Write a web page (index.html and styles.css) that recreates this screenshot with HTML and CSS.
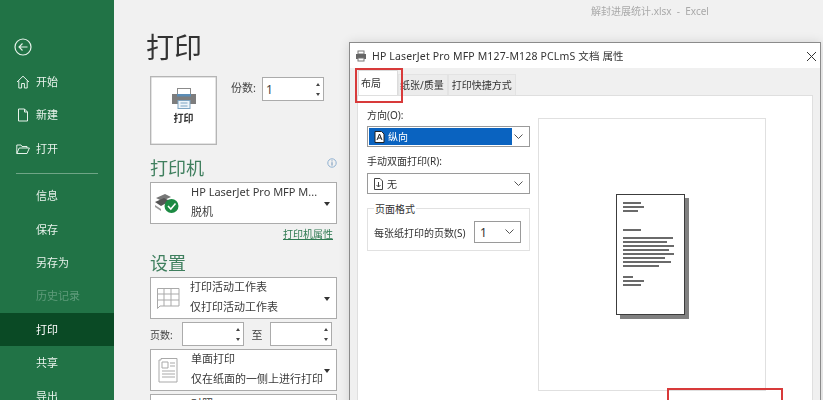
FILE: index.html
```html
<!DOCTYPE html>
<html lang="zh">
<head>
<meta charset="utf-8">
<title>打印</title>
<link rel="stylesheet" href="styles.css">
</head>
<body>
<div class="app">
  <nav class="side">
    <svg class="back" width="18" height="18" viewBox="0 0 18 18"><circle cx="9" cy="9" r="8" fill="none" stroke="#e6f2ea" stroke-width="1.2"/><path d="M13.5 9H5M8.5 5.5 5 9l3.5 3.5" fill="none" stroke="#e6f2ea" stroke-width="1.1"/></svg>
    <ul class="nav">
      <li class="nav-item"><svg class="nav-ico" width="14" height="14" viewBox="0 0 14 14"><path d="M1 7 7 1.2 13 7M2.8 5.6V13H5.6V8.5H8.4V13H11.2V5.6" fill="none" stroke="#e6f2ea"/></svg>开始</li>
      <li class="nav-item"><svg class="nav-ico" width="14" height="14" viewBox="0 0 14 14"><path d="M2.5 1H8.5L11.5 4V13H2.5ZM8.5 1V4H11.5" fill="none" stroke="#e6f2ea"/></svg>新建</li>
      <li class="nav-item"><svg class="nav-ico" width="14" height="14" viewBox="0 0 14 14"><path d="M.8 11.5V3H5L6 4.5H11V6M.8 11.5 3.2 6H13.4L11 11.5Z" fill="none" stroke="#e6f2ea"/></svg>打开</li>
      <li class="nav-rule"></li>
      <li class="nav-item">信息</li>
      <li class="nav-item">保存</li>
      <li class="nav-item">另存为</li>
      <li class="nav-item is-off">历史记录</li>
      <li class="nav-item is-on">打印</li>
      <li class="nav-item">共享</li>
      <li class="nav-item">导出</li>
    </ul>
  </nav>

  <main class="main">
    <div class="doc-name">解封进展统计.xlsx&nbsp; - &nbsp;Excel</div>
    <h1 class="page-title">打印</h1>
    <div class="print-row">
      <button class="print-btn">
        <svg width="24" height="21" viewBox="0 0 24 21"><rect x="5.500" y=".5" width="13" height="8" fill="#fff" stroke="#8b8b8b"/><path d="M0 6H24V16H0Z" fill="#7d7d7d"/><rect x="5" y="6" width="14" height="2.500" fill="#5b8cb5"/><rect x="6" y="12.500" width="12" height="8" fill="#eef5fa" stroke="#7da4c2"/><path d="M8.500 15H15.500M8.500 18H15.500" stroke="#7da4c2"/></svg>
        <span>打印</span>
      </button>
      <label class="copies">份数:</label>
      <div class="spin copies-spin"><span class="spin-val">1</span><span class="arrows"><i class="up"></i><i class="down"></i></span></div>
    </div>

    <div class="head-row">
      <h2 class="sec">打印机</h2>
      <svg class="info" width="10" height="10" viewBox="0 0 10 10"><circle cx="5" cy="5" r="4.2" fill="none" stroke="#8fb0d0"/><path d="M5 4.2V7.6M5 2.4V3.4" stroke="#6f93b8"/></svg>
    </div>
    <div class="drop printer">
      <svg class="drop-ico" width="28" height="24" viewBox="0 0 28 24"><path d="M3 7 12 3 18 6 9 10Z" fill="#777"/><path d="M2 11 11 7 17 10 8 15Z" fill="#555"/><path d="M2 14 8 18 8 20 2 16Z" fill="#999"/><circle cx="18.500" cy="15" r="7" fill="#1c8a43"/><path d="M15 15 17.800 18 22.500 12.500" fill="none" stroke="#fff" stroke-width="1.500"/></svg>
      <div class="drop-text"><span>HP LaserJet Pro MFP M...</span><span>脱机</span></div>
      <i class="caret"></i>
    </div>
    <a class="prop-link">打印机属性</a>

    <h2 class="sec settings">设置</h2>
    <div class="drop">
      <svg class="drop-ico" width="26" height="24" viewBox="0 0 26 24"><path d="M3.500 2.500H25V20H6L3.500 22.500ZM3.500 8H25M3.500 14H25M10 2.500V20M17 2.500V20" fill="none" stroke="#a9a9a9"/></svg>
      <div class="drop-text"><span>打印活动工作表</span><span>仅打印活动工作表</span></div>
      <i class="caret"></i>
    </div>
    <div class="pages">
      <label>页数:</label>
      <div class="spin page-spin"><span class="arrows"><i class="up"></i><i class="down"></i></span></div>
      <label class="to">至</label>
      <div class="spin page-spin"><span class="arrows"><i class="up"></i><i class="down"></i></span></div>
    </div>
    <div class="drop">
      <svg class="drop-ico side-ico" width="22" height="26" viewBox="0 0 22 26"><path d="M4 1.500H20V25H2V3M2 3H4V1.500" fill="none" stroke="#a9a9a9"/><path d="M5 5H11V11H5ZM13 6H18M13 9H18M5 14H18M5 17H18M5 20H18" fill="none" stroke="#a9a9a9"/></svg>
      <div class="drop-text"><span>单面打印</span><span>仅在纸面的一侧上进行打印</span></div>
      <i class="caret"></i>
    </div>
    <div class="drop last"><div class="drop-text"><span>对照</span></div></div>
  </main>
</div>

<section class="dialog">
  <header class="dlg-title">
    <svg width="12" height="12" viewBox="0 0 12 12"><rect x="3" y="1" width="6" height="3" fill="#fff" stroke="#777"/><rect x="1" y="4" width="10" height="5" fill="#666"/><rect x="3" y="8" width="6" height="3" fill="#fff" stroke="#777"/></svg>
    <span class="dlg-name">HP LaserJet Pro MFP M127-M128 PCLmS 文档 属性</span>
    <svg class="close" width="11" height="11" viewBox="0 0 11 11"><path d="M1 1 10 10M10 1 1 10" stroke="#333" stroke-width="1"/></svg>
  </header>
  <div class="tabs">
    <span class="tab active">布局</span>
    <span class="tab paper">纸张/质量</span>
    <span class="tab">打印快捷方式</span>
  </div>
  <div class="panel">
    <div class="form">
      <label class="f-label">方向(O):</label>
      <div class="select focus"><span class="sel-val"><svg width="11" height="12" viewBox="0 0 11 12"><path d="M1 .5H7.500L10 3V11.500H1Z" fill="#fff" stroke="#222"/><path d="M3 9 5.500 3 8 9M4 7H7" fill="none" stroke="#222"/></svg>纵向</span><svg class="chev" width="9" height="5" viewBox="0 0 9 5"><path d="M.5.500 4.500 4.500 8.500.5" fill="none" stroke="#555"/></svg></div>
      <label class="f-label second">手动双面打印(R):</label>
      <div class="select duplex"><span class="sel-val plain"><svg width="11" height="12" viewBox="0 0 11 12"><path d="M1.500.5H7L9.500 3V11.500H1.500Z" fill="#fff" stroke="#444"/><path d="M5.500 4V9M3.500 7 5.500 9 7.500 7" fill="none" stroke="#444"/></svg>无</span><svg class="chev" width="9" height="5" viewBox="0 0 9 5"><path d="M.5.500 4.500 4.500 8.500.5" fill="none" stroke="#555"/></svg></div>
      <fieldset class="group">
        <legend>页面格式</legend>
        <label>每张纸打印的页数(S)</label>
        <div class="select mini"><span class="sel-val plain">1</span><svg class="chev" width="9" height="5" viewBox="0 0 9 5"><path d="M.5.500 4.500 4.500 8.500.5" fill="none" stroke="#555"/></svg></div>
      </fieldset>
    </div>
    <div class="preview">
      <div class="sheet">
        <i style="width:18px"></i><i style="width:21px"></i><i style="width:15px"></i>
        <i class="gap1" style="width:18px"></i>
        <i class="gap2" style="width:50px"></i><i style="width:44px"></i><i style="width:51px"></i><i style="width:46px"></i><i style="width:51px"></i><i style="width:42px"></i><i style="width:48px"></i><i style="width:36px"></i>
        <i class="gap3" style="width:10px"></i><i style="width:21px"></i><i style="width:18px"></i>
      </div>
    </div>
  </div>
</section>
<div class="mark mark-tab"></div>
<div class="mark mark-ok"></div>
</body>
</html>
```

FILE: styles.css
```css
* { box-sizing: border-box; }
html, body { margin: 0; height: 400px; overflow: hidden; }
body {
  position: relative;
  width: 823px;
  font-family: "Noto Sans", "Noto Sans CJK SC", sans-serif;
  font-size: 11px;
  color: #444;
  background: #f1f1f1;
  filter: blur(.35px);
}
.app { display: flex; height: 400px; overflow: hidden; }

/* Sidebar */
.side {
  flex: 0 0 114px;
  background: #217346;
  color: #e9f3ec;
  padding-top: 38px;
}
.back { display: block; margin-left: 14px; }
.nav { list-style: none; margin: 9px 0 0; padding: 0; }
.nav-item {
  position: relative;
  height: 33.4px;
  line-height: 33px;
  padding-left: 36px;
  font-size: 11px;
}
.nav-ico { position: absolute; left: 16px; top: 10px; }
.nav-rule { height: 1px; margin: 8px 16px 5px; background: #6fa586; }
.is-off { color: #5f9c7b; }
.is-on { background: #0a4a25; color: #fff; }

/* Backstage column */
.main { flex: 1; padding-left: 36px; min-width: 0; }
.doc-name { height: 22px; padding: 4px 0 0 441px; font-size: 10px; line-height: 14px; color: #a9a9a9; white-space: nowrap; }
.page-title { margin: 7px 0 0 -4px; font-size: 28px; line-height: 36px; font-weight: 400; color: #333; }
.print-row { display: flex; align-items: flex-start; margin-top: 11px; height: 69px; }
.print-btn {
  display: flex; flex-direction: column; align-items: center; justify-content: flex-start;
  width: 67px; height: 69px; padding: 11px 0 0;
  background: #fff; border: 1px solid #b5b5b5;
  box-shadow: inset 0 0 0 .5px #c8c8c8;
  font: 700 10px/14px "Noto Sans", "Noto Sans CJK SC", sans-serif; color: #333;
}
.print-btn span { margin-top: 2px; }
.copies { margin: 3px 0 0 14px; width: 31px; line-height: 18px; }
.spin { position: relative; display: flex; align-items: center; background: #fff; border: 1px solid #ababab; }
.copies-spin { width: 62px; height: 24px; margin-top: 1px; }
.spin-val { padding-left: 3px; font-size: 12px; }
.arrows { position: absolute; right: 3px; top: 0; bottom: 0; display: flex; flex-direction: column; justify-content: center; gap: 7px; }
.arrows i { display: block; width: 0; height: 0; border-left: 2.500px solid transparent; border-right: 2.500px solid transparent; }
.arrows .up { border-bottom: 3px solid #444; }
.arrows .down { border-top: 3px solid #444; }

.head-row { position: relative; margin-top: 10px; height: 27px; }
.sec { margin: 0; font-size: 18px; line-height: 26px; font-weight: 400; color: #3f7f5e; }
.info { position: absolute; left: 177px; top: 3px; }
.drop {
  position: relative; display: flex; align-items: center;
  width: 187px; height: 42px; background: #fff; border: 1px solid #ababab;
}
.drop-ico { flex: 0 0 auto; margin-left: 3px; }
.side-ico { margin: 0 4px 0 6px; }
.printer .drop-ico { margin-left: 2px; margin-right: 10px; }
.drop-text { display: flex; flex-direction: column; gap: 3px; line-height: 17px; margin: -3px 0 0 10px; white-space: nowrap; color: #3a3a3a; }
.printer .drop-text { margin-left: 0; }
.side-ico + .drop-text { margin-left: 8px; }
.caret { position: absolute; right: 6px; top: 19px; width: 0; height: 0; border-left: 3.500px solid transparent; border-right: 3.500px solid transparent; border-top: 4px solid #333; }
.prop-link { display: block; width: 183px; margin-top: 2px; height: 16px; line-height: 16px; text-align: right; font-size: 10px; color: #2f7a52; text-decoration: underline; }
.settings { margin-top: 8px; }
.settings + .drop { margin-top: 1px; }
.pages { display: flex; align-items: center; width: 187px; height: 24px; margin: 3px 0 3px; }
.pages label { width: 32px; font-size: 10px; }
.pages .to { width: 26px; text-align: center; font-size: 11px; }
.page-spin { width: 62px; height: 24px; }
.last { margin-top: 3px; }
.last .drop-text { margin: 0 0 0 40px; align-self: flex-start; }

/* Dialog */
.dialog {
  position: absolute; left: 349px; top: 42px; width: 472px; height: 370px;
  background: #f0f0f0; border: 1px solid #8b8b8b;
  box-shadow: 0 0 10px rgba(0,0,0,.12);
  color: #333;
}
.dlg-title { position: relative; display: flex; align-items: center; gap: 5px; height: 25px; padding-left: 5px; background: #fff; }
.dlg-name { font-size: 10.500px; letter-spacing: .16px; color: #333; white-space: nowrap; }
.close { position: absolute; right: 3px; top: 8px; }
.tabs { display: flex; align-items: flex-end; height: 27px; padding: 2px 0 0 8px; }
.tab { height: 21px; padding: 0 3px; line-height: 20px; font-size: 10px; background: #ececec; border: 1px solid #e3e3e3; border-bottom: 0; white-space: nowrap; }
.tab.active { height: 25px; width: 40px; padding: 2px 2px 0; background: #fff; border-color: #dcdcdc; }
.tab.paper { padding: 0 3px 0 1px; }
.panel { display: flex; height: 320px; margin: 0 7px 0 7px; background: #fff; border: 1px solid #dfdfdf; padding: 11px 0 0 9px; }
.form { flex: 0 0 163px; }
.f-label { display: block; font-size: 10px; line-height: 14px; margin-top: 1px; }
.second { margin-top: 7px; }
.select { position: relative; display: flex; align-items: center; height: 21px; margin-top: 4px; border: 1px solid #9a9a9a; background: #fff; }
.focus { padding: 1px; margin-top: 4px; background: #fff; }
.duplex { margin-top: 5px; }
.sel-val { display: flex; align-items: center; gap: 3px; flex: 0 0 143px; height: 100%; padding-left: 5px; font-size: 10px; color: #fff; background: #0a63c0; }
.plain { background: none; color: #333; }
.chev { position: absolute; right: 6px; top: 7px; }
.group { position: relative; display: flex; align-items: center; height: 43px; margin: 14px 0 0; padding: 5px 7px 0 6px; border: 1px solid #e1e1e1; min-width: 0; }
.group legend { position: absolute; left: 6px; top: -7px; padding: 0 1px; background: #fff; font-size: 10px; line-height: 14px; }
.group label { flex: 0 0 100px; font-size: 10px; white-space: nowrap; }
.mini { width: 47px; height: 22px; margin: 0; }
.mini .sel-val { flex: 0 0 20px; font-size: 12px; }
.preview { margin: 11px 0 0 8px; width: 228px; height: 273px; border: 1px solid #e0e0e0; padding: 75px 0 0 77px; }
.sheet {
  width: 69px; height: 121px; padding: 7px 0 0 6px;
  background: #fff; border: 1px solid #3c3c3c; box-shadow: 4px 4px 0 #808080;
  display: flex; flex-direction: column; align-items: flex-start;
}
.sheet i { display: block; height: 2px; margin-bottom: 2px; background: #6a6a6a; }
.sheet .gap1 { margin-top: 15px; }
.sheet .gap2 { margin-top: 4px; }
.sheet .gap3 { margin-top: 7px; }

/* Red callouts */
.mark { position: absolute; border: 2px solid #d83a3a; }
.mark-tab { left: 355px; top: 68px; width: 48px; height: 35px; }
.mark-ok { left: 667px; top: 388px; width: 116px; height: 30px; }
```
